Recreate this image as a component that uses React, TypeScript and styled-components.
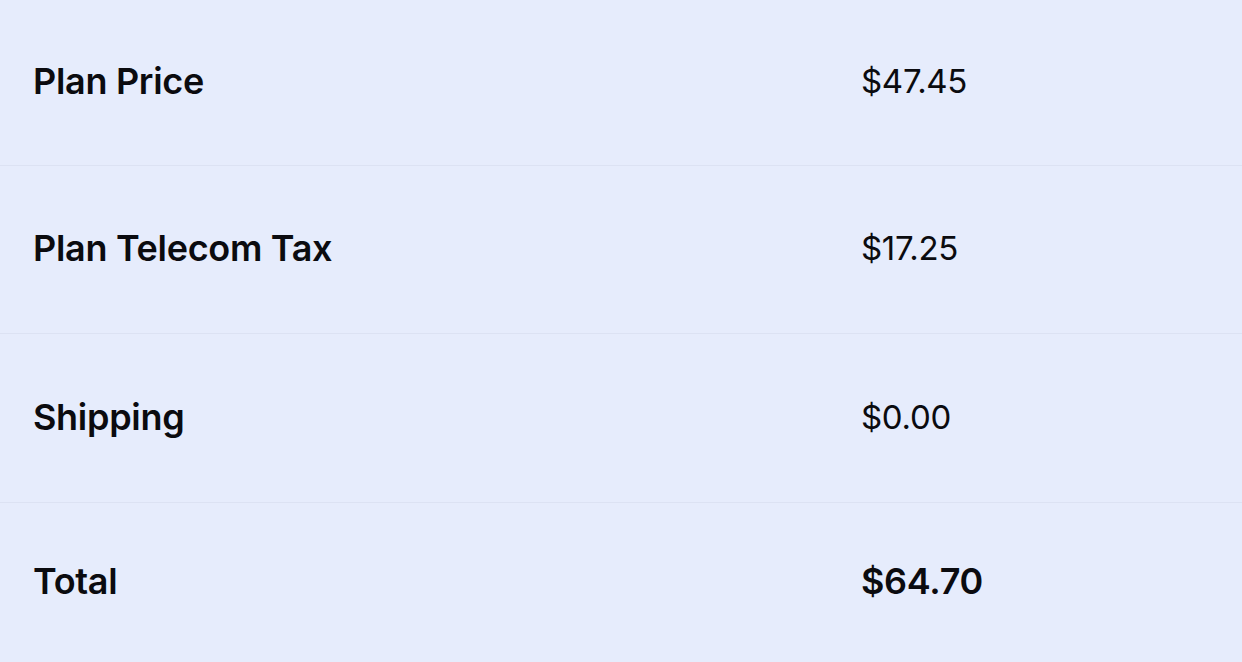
import React from "react";
import styled, { createGlobalStyle } from "styled-components";

const Global = createGlobalStyle`
  html, body { margin: 0; padding: 0; background: #e6ecfc; }
  body { font-family: "Inter", "Open Sans", sans-serif; color: #0b0b0f; }
`;

const Summary = styled.div`
  width: 1242px;
  height: 662px;
  display: flex;
  flex-direction: column;
  background: #e6ecfc;
  overflow: hidden;
`;

const Row = styled.div<{ $h: number; $last?: boolean }>`
  box-sizing: border-box;
  height: ${(p) => p.$h}px;
  flex: ${(p) => (p.$last ? "1 1 auto" : "0 0 auto")};
  display: grid;
  grid-template-columns: 828px 1fr;
  align-items: center;
  padding-bottom: 3px;
  border-bottom: ${(p) => (p.$last ? "none" : "1px solid #dce2f3")};
`;

const Label = styled.div`
  padding-left: 33px;
  font-size: 36px;
  font-weight: 600;
  letter-spacing: -0.3px;
`;

const Value = styled.div<{ $bold?: boolean }>`
  padding-left: 33px;
  font-size: ${(p) => (p.$bold ? 36 : 33)}px;
  font-weight: ${(p) => (p.$bold ? 600 : 400)};
  letter-spacing: -0.3px;
`;

const rows = [
  { label: "Plan Price", value: "$47.45", h: 166 },
  { label: "Plan Telecom Tax", value: "$17.25", h: 168 },
  { label: "Shipping", value: "$0.00", h: 169 },
];

export default function App() {
  return (
    <>
      <Global />
      <Summary>
        {rows.map((r) => (
          <Row key={r.label} $h={r.h}>
            <Label>{r.label}</Label>
            <Value>{r.value}</Value>
          </Row>
        ))}
        <Row $h={159} $last>
          <Label>Total</Label>
          <Value $bold>$64.70</Value>
        </Row>
      </Summary>
    </>
  );
}
